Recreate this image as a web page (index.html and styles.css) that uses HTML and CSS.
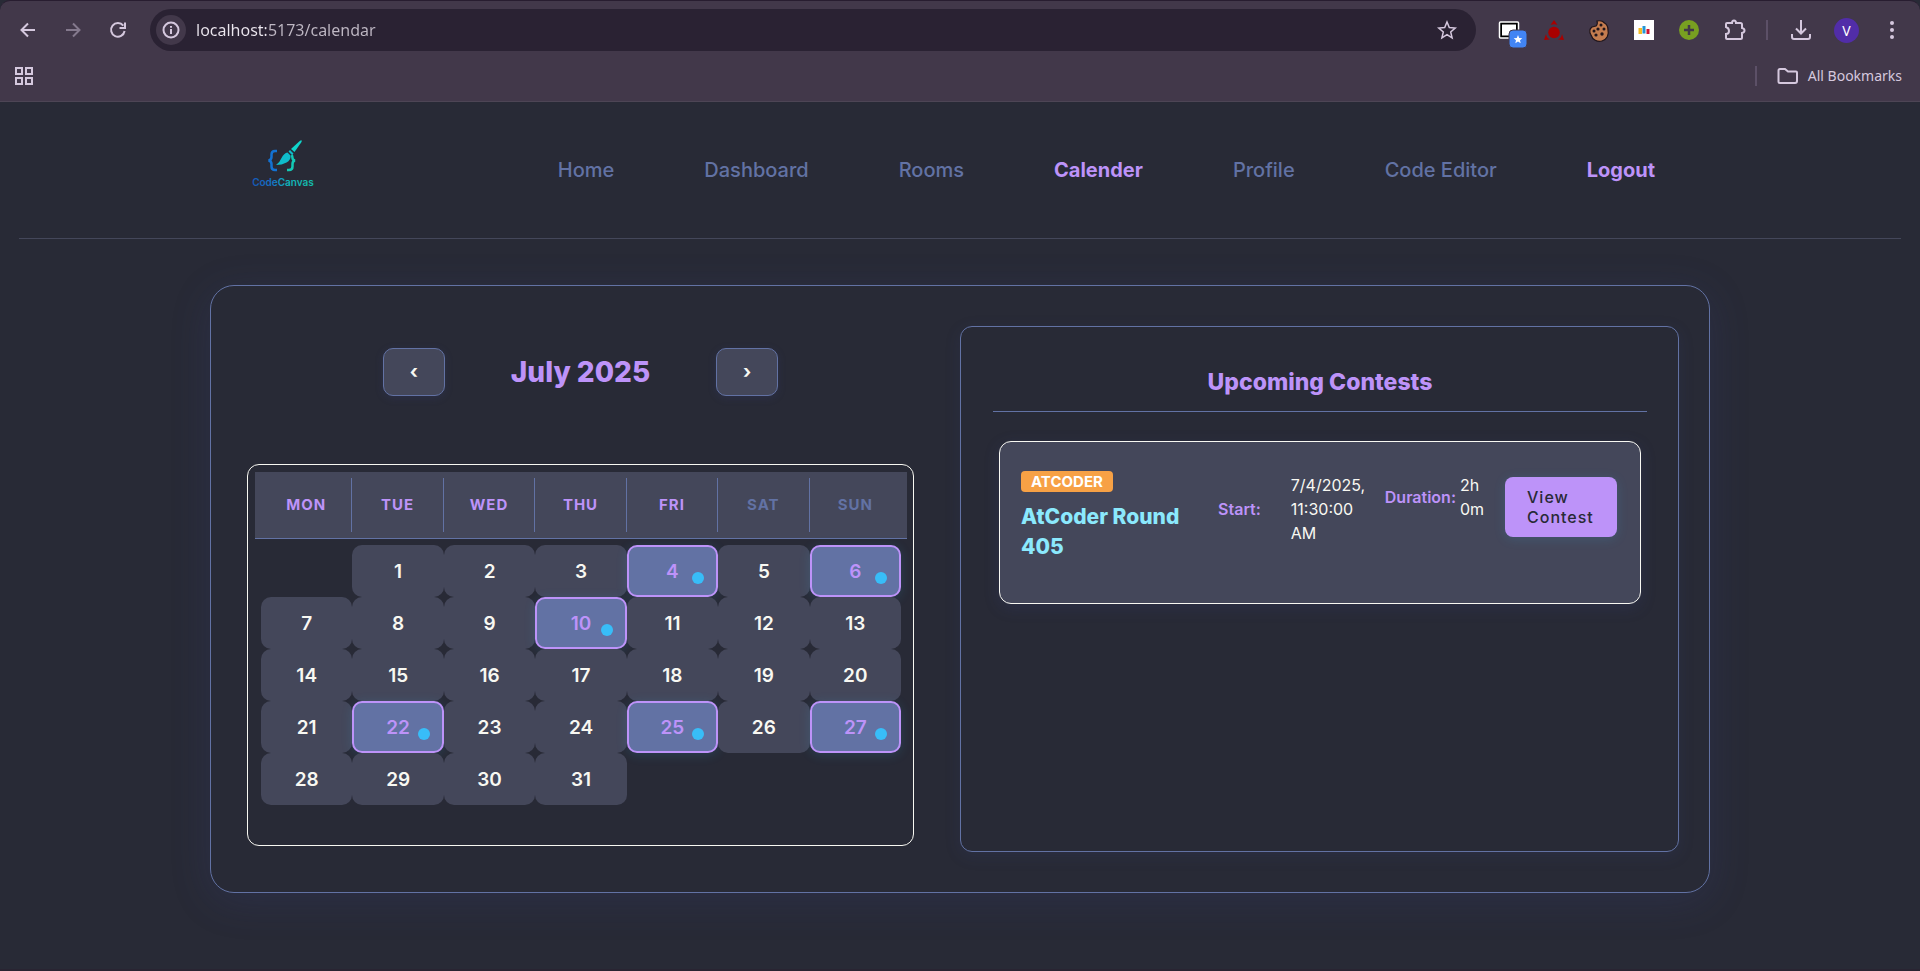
FILE: index.html
```html
<!DOCTYPE html>
<html lang="en">
<head>
<meta charset="utf-8">
<title>CodeCanvas - Calendar</title>
<link rel="stylesheet" href="styles.css">
</head>
<body>
<header class="browser">
  <div class="toolbar">
    <button class="tool" aria-label="Back"><svg width="16" height="16" viewBox="0 0 16 16"><path d="M15 8H2M8 1.500L1.500 8L8 14.500"/></svg></button>
    <button class="tool dim" aria-label="Forward"><svg width="16" height="16" viewBox="0 0 16 16"><path d="M1 8H14M8 1.500L14.500 8L8 14.500"/></svg></button>
    <button class="tool" aria-label="Reload"><svg width="16" height="16" viewBox="0 0 16 16"><path d="M14.600 9A6.800 6.800 0 1 1 13.300 3.700M15 .5V6H9.500"/></svg></button>
    <div class="address">
      <button class="info" aria-label="Site information"><svg width="18" height="18" viewBox="0 0 18 18"><circle cx="9" cy="9" r="7.500"/><path d="M9 8V13M9 5V6.800"/></svg></button>
      <input class="url" type="text" aria-label="Address" value="localhost:5173/calendar">
      <button class="star" aria-label="Bookmark"><svg width="20" height="20" viewBox="0 0 20 20"><path d="M10 2L12.300 7.500L18.200 8L13.700 11.900L15.100 17.800L10 14.600L4.900 17.800L6.300 11.900L1.800 8L7.700 7.500Z"/></svg></button>
    </div>
    <div class="extensions">
      <button aria-label="Window capture"><svg width="20" height="20" viewBox="0 0 20 20"><rect x=".5" y="2" width="19" height="16" rx="1" fill="#000" stroke="#fff" stroke-width="1.500"/><rect x="3" y="4.500" width="14" height="11" fill="#fff" stroke="none"/><rect x="10" y="10" width="18" height="18" rx="4" fill="#4285f4" stroke="#42384a" stroke-width="1"/><path d="M19 15L20.200 18L23.300 18.200L21 20.200L21.700 23.200L19 21.600L16.300 23.200L17 20.200L14.700 18.200L17.800 18Z" fill="#fff" stroke="none"/></svg></button>
      <button aria-label="Triangle extension"><svg width="20" height="20" viewBox="0 0 20 20"><g fill="#a90000" stroke="none"><circle cx="10" cy="12.500" r="5.800"/><path d="M10 0L13.500 5Q10 3.500 6.500 5ZM0 20L2 14Q2.500 18 6 19.500ZM20 20L18 14Q17.500 18 14 19.500Z"/></g></svg></button>
      <button aria-label="Cookies"><svg width="20" height="20" viewBox="0 0 20 20"><path d="M8 1Q13 0 15.500 3Q19 5 19 10A8.500 8.500 0 0 1 2 15Q-1 10 3 7L7 6Q9 4 8 1Z" fill="#c47c4f" stroke="#20151b" stroke-width="1.200"/><g fill="#20151b" stroke="none"><circle cx="12" cy="5" r="1.500"/><circle cx="15" cy="9" r="1.500"/><circle cx="9" cy="9" r="1.600"/><circle cx="5" cy="11" r="1.500"/><circle cx="13" cy="14" r="1.700"/><circle cx="7" cy="15" r="1.600"/></g></svg></button>
      <button aria-label="Charts"><svg width="20" height="20" viewBox="0 0 20 20"><path d="M0 0H20V20H0Z" fill="#fff" stroke="none"/><path d="M4.500 8H8V14H4.500Z" fill="#f5bd24" stroke="none"/><path d="M8.500 6H11.500V13.500H8.500Z" fill="#2496d4" stroke="none"/><path d="M12.500 9H15.500V14H12.500Z" fill="#cf1231" stroke="none"/></svg></button>
      <button aria-label="Add"><svg width="20" height="20" viewBox="0 0 20 20"><circle cx="10" cy="10" r="10" fill="#789f21" stroke="none"/><path d="M10 5V15M5 10H15" stroke="#42384a" stroke-width="2.500"/></svg></button>
      <button aria-label="Extensions"><svg width="22" height="22" viewBox="0 0 22 22"><path d="M3 4H8Q8 1.500 10 1.500T12 4H16.500Q18 4 18 5.500V9Q20.500 9.500 20.500 11.500T18 14V18.500Q18 20 16.500 20H3Q2 20 2 19V15Q5 15 5 12T2 8V5Q2 4 3 4Z"/></svg></button>
    </div>
    <div class="browser-actions">
      <span class="divider"></span>
      <button aria-label="Downloads"><svg width="20" height="20" viewBox="0 0 20 20"><path d="M10 0V13M5 8.500L10 13.500L15 8.500M1 14V17Q1 19 3 19H17Q19 19 19 17V14"/></svg></button>
      <button class="avatar" aria-label="Profile V">V</button>
      <button aria-label="Menu"><svg width="20" height="20" viewBox="0 0 20 20"><g fill="#d5c8de" stroke="none"><circle cx="10" cy="3" r="2"/><circle cx="10" cy="10" r="2"/><circle cx="10" cy="17" r="2"/></g></svg></button>
    </div>
  </div>
  <div class="bookmarks">
    <button class="tool" aria-label="Apps"><svg width="18" height="18" viewBox="0 0 18 18"><path d="M1 1H7V7H1ZM11 1H17V7H11ZM1 11H7V17H1ZM11 11H17V17H11Z"/></svg></button>
    <div class="bookmarks-end"><span class="divider"></span><button class="all-bookmarks"><svg width="22" height="18" viewBox="0 0 22 18"><path d="M3 2H8L11 4.500H19Q20 4.500 20 5.500V14Q20 16 18 16H3Q1.500 16 1.500 14.500V3.500Q1.500 2 3 2Z"/></svg>All Bookmarks</button></div>
  </div>
</header>

<div class="page">
  <div class="site-header">
    <a class="logo" href="#" aria-label="CodeCanvas">
      <svg width="68" height="52" viewBox="0 0 68 52">
        <defs><linearGradient id="brand" gradientUnits="userSpaceOnUse" x1="2" y1="0" x2="66" y2="0"><stop offset="0" stop-color="#1555b5"/><stop offset=".35" stop-color="#1575c9"/><stop offset=".55" stop-color="#10b5bd"/><stop offset="1" stop-color="#16b9a5"/></linearGradient></defs>
        <path d="M28 13H26Q22.500 13 22.500 16.500V19Q22.500 22 19.500 22.500Q22.500 23 22.500 26V28.500Q22.500 32 26 32H28" fill="none" stroke="#1372d3" stroke-width="2.500"/>
        <path d="M42.500 17Q43.500 18 43.500 20Q43.500 22 46 22.500Q43.500 23 43.500 26V28.500Q43.500 32 40 32H38" fill="none" stroke="#13c9b5" stroke-width="2.500"/>
        <path d="M27 27Q31 24 32.500 20Q35 15 38.500 14.500L41.500 17.500Q42 22 37.500 24.500Q33 27 27 27ZM39.500 13.500L41 12L44.500 15.500L43 17Z" fill="#0fbccb"/>
        <path d="M42 11L51 2.800Q53.500 1.500 52.500 4L45.500 14Z" fill="#10d5cb"/>
        <text class="brand-text" x="34" y="48" text-anchor="middle" fill="url(#brand)">CodeCanvas</text>
      </svg>
    </a>
    <nav class="nav">
      <a href="#">Home</a><a href="#">Dashboard</a><a href="#">Rooms</a><a class="active" href="#">Calender</a><a href="#">Profile</a><a href="#">Code Editor</a><a class="active" href="#">Logout</a>
    </nav>
  </div>

  <main class="board">
    <section class="calendar-side">
      <div class="month-bar"><button class="month-step" aria-label="Previous month">‹</button><h1>July 2025</h1><button class="month-step" aria-label="Next month">›</button></div>
      <div class="calendar">
        <div class="weekdays"><span>MON</span><span>TUE</span><span>WED</span><span>THU</span><span>FRI</span><span class="weekend">SAT</span><span class="weekend">SUN</span></div>
        <div class="days">
          <span></span><button>1</button><button>2</button><button>3</button><button class="event">4</button><button>5</button><button class="event">6</button>
          <button>7</button><button>8</button><button>9</button><button class="event">10</button><button>11</button><button>12</button><button>13</button>
          <button>14</button><button>15</button><button>16</button><button>17</button><button>18</button><button>19</button><button>20</button>
          <button>21</button><button class="event">22</button><button>23</button><button>24</button><button class="event">25</button><button>26</button><button class="event">27</button>
          <button>28</button><button>29</button><button>30</button><button>31</button>
        </div>
      </div>
    </section>
    <section class="contests">
      <h2>Upcoming Contests</h2>
      <article class="contest">
        <div class="contest-name"><span class="badge">ATCODER</span><h3>AtCoder Round 405</h3></div>
        <dl class="start"><dt>Start:</dt><dd>7/4/2025, 11:30:00 AM</dd></dl>
        <dl class="duration"><dt>Duration:</dt><dd>2h 0m</dd></dl>
        <button class="view">View Contest</button>
      </article>
    </section>
  </main>
</div>
</body>
</html>
```

FILE: styles.css
```css
* { box-sizing: border-box; }

body {
  margin: 0;
  min-height: 100vh;
  border-bottom: 2px solid #292432;
  background: #282a36;
  color: #f8f8f2;
  font: 16px/24px Inter, sans-serif;
}

button {
  padding: 0;
  border: 0;
  background: none;
  color: inherit;
  font: inherit;
}

a { text-decoration: none; }
svg { display: block; overflow: visible; }

/* browser chrome */
.browser {
  height: 102px;
  border-top: 1px solid #281d30;
  border-bottom: 1px solid #4d4555;
  border-radius: 10px 10px 0 0;
  background: #42384a;
  color: #d5c8de;
}

.browser svg { fill: none; stroke: #d5c8de; stroke-width: 2; }

.toolbar {
  display: flex;
  align-items: center;
  height: 58px;
  padding: 0 18px 0 20px;
}

.tool { margin-right: 29px; }
.dim { opacity: .45; }

.address {
  display: flex;
  flex: 1;
  align-items: center;
  height: 42px;
  margin-left: -5px;
  padding: 0 19px 0 6px;
  border-radius: 21px;
  background: #2a2233;
}

.info {
  display: grid;
  place-items: center;
  width: 30px;
  height: 30px;
  border-radius: 50%;
  background: #42384a;
}

/* the host is brighter than the rest of the address */
.url {
  flex: 1;
  min-width: 0;
  margin-left: 10px;
  padding: 0;
  border: 0;
  background: linear-gradient(90deg, #ece7ef 70px, #bfb8c4 70px);
  background-clip: text;
  -webkit-background-clip: text;
  color: transparent;
  font: 16px/24px "Noto Sans", sans-serif;
}

.star svg { stroke-width: 1.500; }

.extensions, .browser-actions { display: flex; align-items: center; }
.extensions { gap: 25px; padding: 0 20px 0 23px; }
.browser-actions { gap: 23px; }
.divider { width: 2px; height: 20px; background: #5c5067; }

.avatar {
  width: 25px;
  height: 25px;
  border-radius: 50%;
  background: #512da8;
  color: #fff;
  font: 14px/25px "Noto Sans", sans-serif;
}

.bookmarks {
  display: flex;
  align-items: center;
  justify-content: space-between;
  height: 34px;
  padding: 0 18px 0 15px;
}

.bookmarks-end, .all-bookmarks { display: flex; align-items: center; }
.bookmarks-end { gap: 20px; }
.all-bookmarks { gap: 9px; font: 14px/20px "Noto Sans", sans-serif; }

/* site */
.page { padding: 0 19px 70px; }

.site-header {
  display: flex;
  align-items: center;
  justify-content: space-between;
  height: 137px;
  padding: 0 246px 0 230px;
  border-bottom: 1px solid #44475a;
}

.logo { padding-bottom: 12px; }
.brand-text { font: 600 10px Inter, sans-serif; }
.nav { display: flex; gap: 90px; font-size: 20px; font-weight: 500; }
.nav a { color: #6272a4; }
.nav .active { color: #bd93f9; font-weight: 700; }

.board {
  display: grid;
  grid-template-columns: 667fr 719fr;
  gap: 46px;
  max-width: 1500px;
  margin: 46px auto 0;
  padding: 40px 30px 40px 36px;
  border: 1px solid #6272a4;
  border-radius: 24px;
  box-shadow: 0 8px 40px rgba(60, 72, 140, .2);
}

.calendar-side { padding-bottom: 6px; }

.month-bar {
  display: flex;
  align-items: center;
  justify-content: center;
  gap: 66px;
  padding: 22px 0 68px;
}

h1, h2, h3 { margin: 0; font-weight: 800; }
h1 { color: #bd93f9; font-size: 28px; line-height: 48px; }

.month-step {
  width: 62px;
  height: 48px;
  border: 1px solid #6272a4;
  border-radius: 10px;
  background: #44475a;
  box-shadow: 0 2px 8px rgba(60, 72, 140, .2);
  font-size: 19px;
  font-weight: 700;
}

.calendar {
  padding: 7px 6px 40px 7px;
  border: 1px solid #f8f8f2;
  border-radius: 12px;
}

.weekdays, .days { display: grid; grid-template-columns: repeat(7, 1fr); padding: 6px; }

.weekdays {
  border-bottom: 1px solid #6272a4;
  background: #44475a;
  color: #bd93f9;
  font-size: 15px;
  font-weight: 700;
  line-height: 54px;
  letter-spacing: 1px;
  text-align: center;
}

.weekdays span:not(:last-child) { border-right: 1px solid #6272a4; }
.weekdays .weekend { color: #6272a4; }
.days { padding-bottom: 0; }

.days button {
  position: relative;
  height: 52px;
  padding-top: 2px;
  border-radius: 10px;
  background: #44475a;
  font-size: 19px;
  font-weight: 600;
}

.days .event {
  border: 2px solid #bd93f9;
  background: #6272a4;
  box-shadow: 0 2px 12px rgba(56, 189, 248, .15);
  color: #bd93f9;
}

.event::after {
  content: "";
  position: absolute;
  right: 12px;
  bottom: 11px;
  width: 12px;
  height: 12px;
  border-radius: 50%;
  background: #38bdf8;
}

.contests {
  padding: 32px 31px 32px 32px;
  border: 1px solid #6272a4;
  border-radius: 12px;
  box-shadow: 0 4px 16px rgba(60, 72, 140, .15);
}

h2 {
  padding: 7px 0 13px;
  border-bottom: 1px solid #6272a4;
  color: #bd93f9;
  font-size: 23px;
  line-height: 32px;
  text-align: center;
}

.contest {
  display: flex;
  align-items: flex-start;
  min-height: 163px;
  margin: 29px 6px 0;
  padding: 29px 23px 29px 21px;
  border: 1px solid #f8f8f2;
  border-radius: 12px;
  background: #44475a;
  box-shadow: 0 4px 16px rgba(60, 72, 140, .2);
}

.contest-name { flex: 1; padding-right: 24px; }

.badge {
  display: block;
  width: fit-content;
  padding: 0 10px;
  border-radius: 4px;
  background: #f7a145;
  color: #fff;
  font-size: 15px;
  font-weight: 700;
  line-height: 21px;
}

h3 { padding-top: 10px; color: #8be9fd; font-size: 21px; line-height: 30px; }

dl { display: flex; align-items: center; margin: 2px 0 0; }
dt { color: #bd93f9; font-weight: 600; }
dd { margin: 0; }
.start { gap: 30px; }
.start dd { width: 94px; padding-right: 14px; }
.duration { gap: 4px; }
.duration dd { width: 45px; }

.view {
  width: 112px;
  margin-top: 6px;
  padding: 10px 22px;
  border-radius: 8px;
  background: #bd93f9;
  box-shadow: 0 2px 12px rgba(56, 189, 248, .15);
  color: #282a36;
  font-weight: 500;
  line-height: 20px;
  letter-spacing: 1px;
  text-align: left;
}
```
